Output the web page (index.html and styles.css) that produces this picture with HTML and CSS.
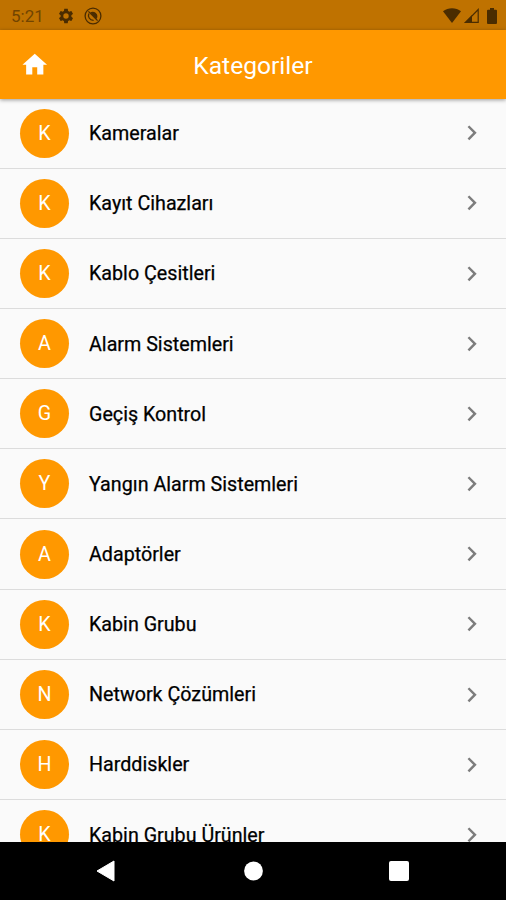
FILE: index.html
```
<!DOCTYPE html>
<html lang="tr">

<head>
    <meta charset="UTF-8">
    <title>Kategoriler</title>
    <link rel="stylesheet" href="styles.css">
</head>

<body>

    <!-- shared icons -->
    <svg class="sprite">
        <symbol id="chevron" viewBox="0 0 24 24">
            <path d="M10 6L8.59 7.41 13.17 12l-4.58 4.59L10 18l6-6z"/>
        </symbol>
    </svg>

    <div class="statusBar">
        <span class="clock">5:21</span>
        <svg class="gearIcon" viewBox="0 0 24 24">
            <path fill-rule="evenodd" d="M19.14 12.94c.04-.3.06-.61.06-.94 0-.32-.02-.64-.07-.94l2.03-1.58c.18-.14.23-.41.12-.61l-1.92-3.32c-.12-.22-.37-.29-.59-.22l-2.39.96c-.5-.38-1.03-.7-1.62-.94l-.36-2.54c-.04-.24-.24-.41-.48-.41h-3.84c-.24 0-.43.17-.47.41l-.36 2.54c-.59.24-1.13.57-1.62.94l-2.39-.96c-.22-.08-.47 0-.59.22L2.74 8.87c-.12.21-.08.47.12.61l2.03 1.58c-.05.3-.09.63-.09.94s.02.64.07.94l-2.03 1.58c-.18.14-.23.41-.12.61l1.92 3.32c.12.22.37.29.59.22l2.39-.96c.5.38 1.03.7 1.62.94l.36 2.54c.05.24.24.41.48.41h3.84c.24 0 .44-.17.47-.41l.36-2.54c.59-.24 1.13-.56 1.62-.94l2.39.96c.22.08.47 0 .59-.22l1.92-3.32c.12-.22.07-.47-.12-.61l-2.01-1.58zM12 15.6a3.6 3.6 0 1 1 0-7.2 3.6 3.6 0 0 1 0 7.2z"/>
        </svg>
        <svg class="syncIcon" viewBox="0 0 18 18">
            <circle cx="9" cy="9" r="7.9" fill="none" stroke="currentColor" stroke-width="1.3"/>
            <path d="M6.2 5.2C9.5 3.6 13.2 5.6 13.4 9 13.4 10.3 13 11.3 12.4 12L9.6 9.3 8 7.7Z"/>
            <path d="M4.9 6.4C3.6 9.4 5.4 13.4 9.6 13.3" fill="none" stroke="currentColor" stroke-width="1.3"/>
            <path d="M4.4 4.4L13.6 13.6" stroke="currentColor" stroke-width="1.3"/>
        </svg>
        <div class="statusRight">
            <svg width="18" height="15" viewBox="0 0 18 15">
                <path d="M0 3.3C5 -.7 13 -.7 18 3.3L9 15Z"/>
            </svg>
            <svg width="15" height="15" viewBox="0 0 15 15">
                <path d="M1.7 14.3L14.2 1.5V14.3Z" fill="none" stroke="currentColor" stroke-width="1.2"/>
                <path d="M0 15L8 7V15Z"/>
            </svg>
            <svg class="batteryIcon" width="10" height="16" viewBox="0 0 10 16">
                <path d="M3 0H7V1.7H9Q10 1.7 10 2.7V15Q10 16 9 16H1Q0 16 0 15V2.7Q0 1.7 1 1.7H3Z"/>
            </svg>
        </div>
    </div>

    <header>
        <svg class="homeIcon" viewBox="0 0 24 24">
            <path d="M10 20v-6h4v6h5v-8h3L12 3 2 12h3v8z"/>
        </svg>
        <h1>Kategoriler</h1>
    </header>

    <main>
        <div class="row">
            <div class="avatar">K</div>
            <p>Kameralar</p>
            <svg class="chevron"><use href="#chevron"/></svg>
        </div>
        <div class="row">
            <div class="avatar">K</div>
            <p>Kayıt Cihazları</p>
            <svg class="chevron"><use href="#chevron"/></svg>
        </div>
        <div class="row">
            <div class="avatar">K</div>
            <p>Kablo Çesitleri</p>
            <svg class="chevron"><use href="#chevron"/></svg>
        </div>
        <div class="row">
            <div class="avatar">A</div>
            <p>Alarm Sistemleri</p>
            <svg class="chevron"><use href="#chevron"/></svg>
        </div>
        <div class="row">
            <div class="avatar">G</div>
            <p>Geçiş Kontrol</p>
            <svg class="chevron"><use href="#chevron"/></svg>
        </div>
        <div class="row">
            <div class="avatar">Y</div>
            <p>Yangın Alarm Sistemleri</p>
            <svg class="chevron"><use href="#chevron"/></svg>
        </div>
        <div class="row">
            <div class="avatar">A</div>
            <p>Adaptörler</p>
            <svg class="chevron"><use href="#chevron"/></svg>
        </div>
        <div class="row">
            <div class="avatar">K</div>
            <p>Kabin Grubu</p>
            <svg class="chevron"><use href="#chevron"/></svg>
        </div>
        <div class="row">
            <div class="avatar">N</div>
            <p>Network Çözümleri</p>
            <svg class="chevron"><use href="#chevron"/></svg>
        </div>
        <div class="row">
            <div class="avatar">H</div>
            <p>Harddiskler</p>
            <svg class="chevron"><use href="#chevron"/></svg>
        </div>
        <div class="row">
            <div class="avatar">K</div>
            <p>Kabin Grubu Ürünler</p>
            <svg class="chevron"><use href="#chevron"/></svg>
        </div>
    </main>

    <footer>
        <svg width="20" height="22" viewBox="0 0 20 22">
            <path d="M0 11L17 1V21Z" stroke="white" stroke-linejoin="round"/>
        </svg>
        <svg width="20" height="20" viewBox="0 0 20 20">
            <circle cx="10.5" cy="10" r="9.4"/>
        </svg>
        <svg width="20" height="20" viewBox="0 0 20 20">
            <rect width="20" height="20" rx="2"/>
        </svg>
    </footer>

</body>

</html>
```
FILE: styles.css
```
body {
    margin: 0;
    height: 100vh;
    display: flex;
    flex-direction: column;
    overflow: hidden;
    background-color: #fafafa;
    font-family: Roboto, "Noto Sans", sans-serif;
}

svg {
    display: block;
    flex: none;
    fill: currentColor;
}

.sprite {
    display: none;
}

/* Android status bar */
.statusBar {
    flex: none;
    height: 30px;
    box-sizing: border-box;
    padding: 1px 9px 0 11px;
    display: flex;
    align-items: center;
    background-color: #bf7200;
    color: #4a2c00;
}

.clock {
    width: 46px;
    font-size: 17px;
    color: #714400;
}

.gearIcon {
    width: 18px;
    height: 18px;
}

.syncIcon {
    width: 18px;
    height: 18px;
    margin-left: 9px;
}

.statusRight {
    margin-left: auto;
    display: flex;
    align-items: center;
    gap: 3px;
}

.batteryIcon {
    margin-left: 5px;
}

/* App bar */
header {
    flex: none;
    height: 68.5px;
    box-sizing: border-box;
    padding: 0 20px;
    display: grid;
    grid-template-columns: 30px 1fr 30px;
    align-items: center;
    background-color: #ff9800;
    color: white;
    box-shadow: 0 1px 4px rgba(0, 0, 0, 0.4);
    z-index: 1;
}

.homeIcon {
    width: 29.5px;
    height: 29.5px;
}

h1 {
    margin: 2px 0 0;
    text-align: center;
    font-size: 24.6px;
    font-weight: 400;
}

/* Category list */
main {
    flex: 1;
    min-height: 0;
    overflow: hidden;
}

.row {
    height: 70.17px;
    box-sizing: border-box;
    padding: 0 20px;
    display: flex;
    align-items: center;
    border-bottom: 1px solid #dcdcdc;
}

.avatar {
    flex: none;
    width: 49px;
    height: 49px;
    border-radius: 50%;
    display: flex;
    align-items: center;
    justify-content: center;
    background-color: #ff9800;
    color: white;
    font-size: 19.7px;
}

.row p {
    flex: 1;
    margin: 1px 0 0 20px;
    font-size: 19.7px;
    color: black;
    -webkit-text-stroke: 0.25px black;
}

.chevron {
    width: 29.5px;
    height: 29.5px;
    color: #7d7d7d;
}

/* Navigation buttons */
footer {
    flex: none;
    height: 58px;
    box-sizing: border-box;
    padding: 0 97px;
    display: flex;
    align-items: center;
    justify-content: space-between;
    background-color: black;
    color: white;
}
```
